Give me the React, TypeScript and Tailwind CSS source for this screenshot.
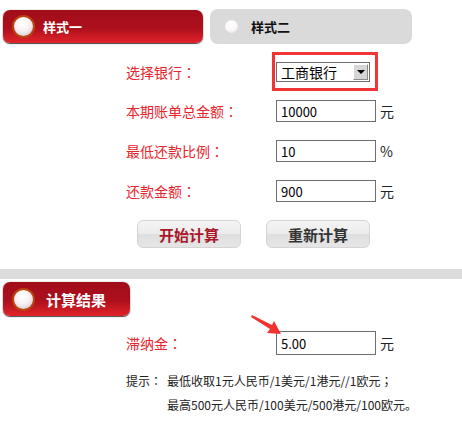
import React from 'react'

const font = "font-['Noto_Sans_CJK_SC','Noto_Sans',sans-serif]"

const Ball: React.FC<{ big?: boolean }> = ({ big }) =>
  big ? (
    <span className="block w-[23px] h-[23px] rounded-full border-2 border-[#b9420f] bg-[radial-gradient(circle_at_45%_35%,#ffffff_0%,#f7f1f3_45%,#cdbcc2_100%)]" />
  ) : (
    <span className="block w-[13px] h-[13px] rounded-full bg-[radial-gradient(circle_at_45%_35%,#ffffff_0%,#fbf6f8_55%,#e3d6db_100%)]" />
  )

// full-width punctuation, centred in its cell like the original page's font
const Punct: React.FC<{ ch?: string }> = ({ ch = '：' }) => <span className="font-['Noto_Sans_CJK_TC',sans-serif]">{ch}</span>

const Label: React.FC<{ text: string }> = ({ text }) => (
  <span className="w-[150px] text-[14px] leading-none text-[#e8242c]">{text}<Punct /></span>
)

const Field: React.FC<{ label: string, value: string, unit: string }> = ({ label, value, unit }) => (
  <div className="flex items-center h-[22px] mt-[18px]">
    <Label text={label} />
    <div className="w-[100px] h-[22px] border border-[#6e6e6e] flex items-center pl-[4px] text-[13px] text-black leading-none">{value}</div>
    <span className="ml-[4px] text-[14px] leading-none text-[#222]">{unit}</span>
  </div>
)

export default function App () {
  return (
    <div className={`relative w-[462px] h-[424px] bg-white overflow-hidden ${font}`}>
      {/* tabs */}
      <div className="flex items-start gap-[7px] pt-[9px] pl-[3px]">
        <div className="mt-[1px] w-[200px] h-[33px] rounded-[7px] flex items-center pl-[9px] gap-[8px] bg-[linear-gradient(#a10d1a,#ac101c_55%,#e2232a)] shadow-[0_1px_1px_#4a4a4a,0_0_0_1px_#eeeeee]">
          <Ball big />
          <span className="text-white text-[13px] font-bold leading-none">样式一</span>
        </div>
        <div className="w-[202px] h-[35px] rounded-[8px] bg-[#dadada] flex items-center pl-[15px] gap-[13px]">
          <Ball />
          <span className="text-[#111] text-[13px] font-bold leading-none">样式二</span>
        </div>
      </div>

      {/* form */}
      <div className="pl-[126px]">
        <div className="flex items-center h-[20px] mt-[18px]">
          <Label text="选择银行" />
          <div className="relative">
            <div className="w-[94px] h-[20px] border border-[#6e6e6e] flex items-center bg-white">
              <span className="flex-1 pl-[4px] text-[14px] leading-none text-black">工商银行</span>
              <span className="w-[15px] h-[16px] mr-[1px] bg-[#d6d6d6] border border-t-white border-l-white border-r-[#8a8a8a] border-b-[#8a8a8a] flex items-center justify-center">
                <span className="w-0 h-0 border-l-[4px] border-r-[4px] border-t-[4px] border-l-transparent border-r-transparent border-t-black" />
              </span>
            </div>
            <div className="absolute left-[-4px] top-[-10px] w-[106px] h-[39px] border-[3px] border-[#f03536]" />
          </div>
        </div>
        <div className="mt-[2px]" />
        <Field label="本期账单总金额" value="10000" unit="元" />
        <Field label="最低还款比例" value="10" unit="%" />
        <Field label="还款金额" value="900" unit="元" />
      </div>

      {/* buttons */}
      <div className="flex gap-[25px] pl-[137px] mt-[18px]">
        <button className="w-[104px] h-[28px] rounded-[6px] border border-[#d4d4d4] bg-[linear-gradient(#f4f4f4,#ebebeb_50%,#dfdfdf_52%,#e6e6e6)] text-[15px] font-bold leading-none text-[#a8182a]">开始计算</button>
        <button className="w-[104px] h-[28px] rounded-[6px] border border-[#d4d4d4] bg-[linear-gradient(#f4f4f4,#ebebeb_50%,#dfdfdf_52%,#e6e6e6)] text-[15px] font-bold leading-none text-[#333]">重新计算</button>
      </div>

      {/* divider */}
      <div className="mt-[21px] h-[10px] bg-[#dcdcdc]" />

      {/* result tab */}
      <div className="ml-[3px] mt-[3px] w-[127px] h-[34px] rounded-[7px] flex items-center pl-[9px] gap-[11px] bg-[linear-gradient(#a10d1a,#ac101c_55%,#e2232a)] shadow-[0_1px_1px_#4a4a4a,0_0_0_1px_#eeeeee]">
        <Ball big />
        <span className="text-white text-[15px] font-bold leading-none">计算结果</span>
      </div>

      {/* result */}
      <div className="pl-[126px]">
        <div className="flex items-center h-[24px] mt-[15px]">
          <Label text="滞纳金" />
          <div className="w-[100px] h-[24px] border border-[#6e6e6e] flex items-center pl-[4px] text-[13px] text-black leading-none">5.00</div>
          <span className="ml-[4px] text-[14px] leading-none text-[#222]">元</span>
        </div>
        <div className="mt-[14px] flex text-[12px] text-[#222] leading-[24px]">
          <span className="w-[41px]">提示<Punct /></span>
          <div>
            <div>最低收取1元人民币/1美元/1港元//1欧元<Punct ch="；" /></div>
            <div>最高500元人民币/100美元/500港元/100欧元。</div>
          </div>
        </div>
      </div>

      {/* arrow annotation */}
      <svg className="absolute left-[250px] top-[313px]" width="36" height="24" viewBox="0 0 36 24">
        <polygon points="2,2 22,12 24,8 31,21 17,20 20,16 1,4" fill="#f2322f" />
      </svg>
    </div>
  )
}
